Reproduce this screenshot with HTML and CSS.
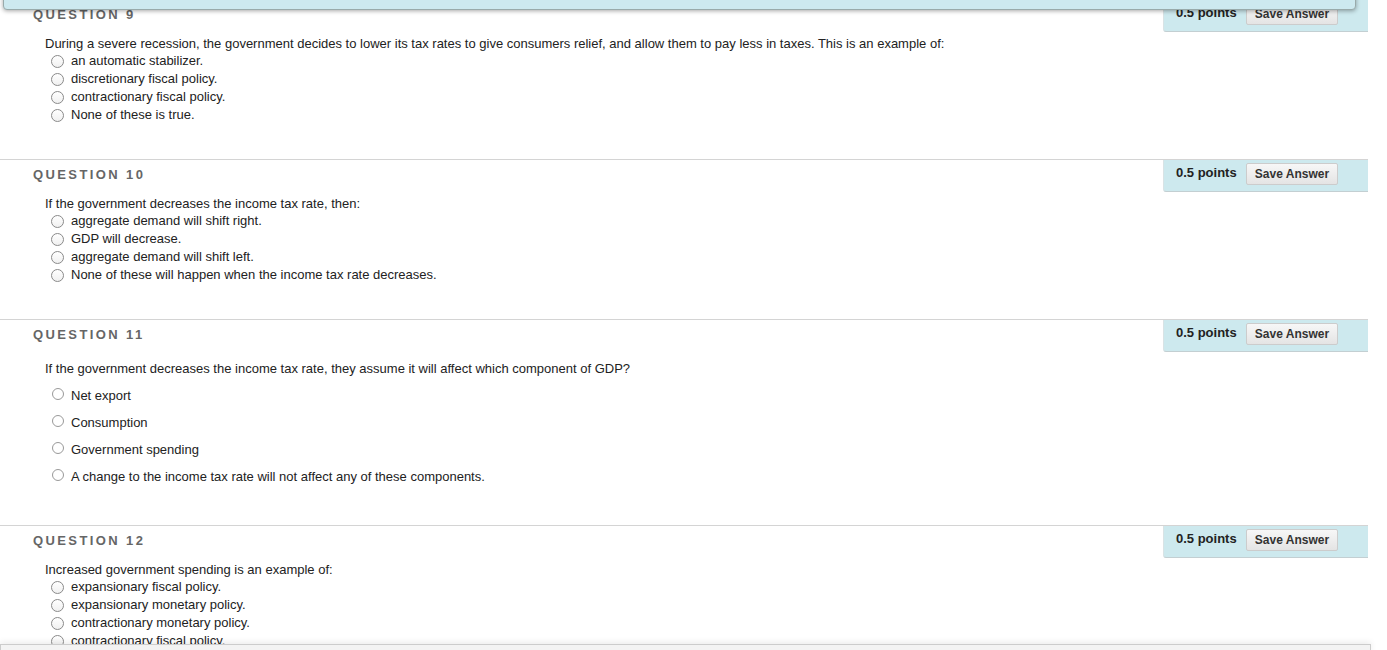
FILE: index.html
```html
<!DOCTYPE html>
<html lang="en">
<head>
    <meta charset="UTF-8">
    <title>Take Test</title>
    <link rel="stylesheet" href="styles.css">
</head>
<body>
    <div class="topbar"></div>

    <div class="questions">
        <div class="question first">
            <div class="q-body">
                <h3>Question 9</h3>
                <div class="q-text">During a severe recession, the government decides to lower its tax rates to give consumers relief, and allow them to pay less in taxes. This is an example of:</div>
                <ul class="answers">
                    <li><input type="radio" name="q9"> an automatic stabilizer.</li>
                    <li><input type="radio" name="q9"> discretionary fiscal policy.</li>
                    <li><input type="radio" name="q9"> contractionary fiscal policy.</li>
                    <li><input type="radio" name="q9"> None of these is true.</li>
                </ul>
            </div>
            <div class="points">
                <span>0.5 points</span>
                <button>Save Answer</button>
            </div>
        </div>

        <div class="question">
            <div class="q-body">
                <h3>Question 10</h3>
                <div class="q-text">If the government decreases the income tax rate, then:</div>
                <ul class="answers">
                    <li><input type="radio" name="q10"> aggregate demand will shift right.</li>
                    <li><input type="radio" name="q10"> GDP will decrease.</li>
                    <li><input type="radio" name="q10"> aggregate demand will shift left.</li>
                    <li><input type="radio" name="q10"> None of these will happen when the income tax rate decreases.</li>
                </ul>
            </div>
            <div class="points">
                <span>0.5 points</span>
                <button>Save Answer</button>
            </div>
        </div>

        <div class="question">
            <div class="q-body">
                <h3>Question 11</h3>
                <div class="q-text spaced">If the government decreases the income tax rate, they assume it will affect which component of GDP?</div>
                <ul class="answers spaced">
                    <li><input type="radio" name="q11"> Net export</li>
                    <li><input type="radio" name="q11"> Consumption</li>
                    <li><input type="radio" name="q11"> Government spending</li>
                    <li><input type="radio" name="q11"> A change to the income tax rate will not affect any of these components.</li>
                </ul>
            </div>
            <div class="points">
                <span>0.5 points</span>
                <button>Save Answer</button>
            </div>
        </div>

        <div class="question">
            <div class="q-body">
                <h3>Question 12</h3>
                <div class="q-text">Increased government spending is an example of:</div>
                <ul class="answers">
                    <li><input type="radio" name="q12"> expansionary fiscal policy.</li>
                    <li><input type="radio" name="q12"> expansionary monetary policy.</li>
                    <li><input type="radio" name="q12"> contractionary monetary policy.</li>
                    <li><input type="radio" name="q12"> contractionary fiscal policy.</li>
                </ul>
            </div>
            <div class="points">
                <span>0.5 points</span>
                <button>Save Answer</button>
            </div>
        </div>
    </div>

    <div class="bottombar"></div>
</body>
</html>
```

FILE: styles.css
```css
body {
    font-family: "Liberation Sans", Helvetica, Arial, sans-serif;
    font-size: 13px;
    color: #222;
    margin: 0;
    background: #fff;
    overflow: hidden;
}
.topbar {
    position: fixed;
    top: -10px;
    left: 3px;
    width: 1351px;
    height: 18px;
    background-color: #cde9ef;
    border: 1px solid #9aa;
    border-radius: 4px;
    box-shadow: 0 1px 4px rgba(0, 0, 0, 0.35);
    z-index: 5;
}
.bottombar {
    position: fixed;
    bottom: -4px;
    left: 0;
    width: 1369px;
    height: 8px;
    background-color: #f3f3f3;
    border: 1px solid #ccc;
    box-shadow: 0 -2px 6px rgba(0, 0, 0, 0.08);
    z-index: 5;
}
.questions {
    margin-right: 19px;
}
.question {
    display: flex;
    border-top: 1px solid #d4d4d4;
}
.question.first {
    margin-top: -1px;
}
.q-body {
    flex: 1;
    padding: 5px 0 36px 33px;
}
h3 {
    margin: 0;
    font-size: 13px;
    line-height: 20px;
    font-weight: bold;
    letter-spacing: 2.4px;
    text-transform: uppercase;
    color: #666;
}
.q-text {
    margin: 12px 0 0 12px;
    line-height: 14px;
}
.q-text.spaced {
    margin-top: 17px;
}
.answers {
    list-style: none;
    margin: 0;
    padding: 0 0 0 18px;
}
.answers li {
    display: flex;
    align-items: center;
    height: 18px;
}
.answers.spaced {
    margin: 6px 0 -1px;
}
.answers.spaced li {
    height: 27px;
}
input[type="radio"] {
    appearance: none;
    -webkit-appearance: none;
    width: 13px;
    height: 13px;
    margin: 2px 7px 0 0;
    border: 1px solid #8a8a8a;
    border-radius: 50%;
    background: linear-gradient(#fff, #f0f0f0);
    box-sizing: border-box;
}
.answers.spaced input[type="radio"] {
    width: 12px;
    height: 12px;
    margin: -4px 7px 0 1px;
    border-color: #999;
    background: #fff;
}
.points {
    width: 205px;
    height: 32px;
    box-sizing: border-box;
    display: flex;
    align-items: flex-start;
    padding: 3px 0 0 12px;
    background-color: #cde9ee;
    border-left: 1px solid #d9e3e5;
    border-bottom: 1px solid #c3cfd2;
    border-bottom-left-radius: 3px;
    font-weight: bold;
}
.points span {
    line-height: 20px;
    color: #222;
    width: 70px;
}
.points button {
    width: 92px;
    height: 22px;
    padding: 0;
    font-family: inherit;
    font-size: 12px;
    font-weight: bold;
    color: #333;
    background: linear-gradient(#f7f7f7, #e4e4e4);
    border: 1px solid #ccc;
    border-radius: 2px;
}
```
